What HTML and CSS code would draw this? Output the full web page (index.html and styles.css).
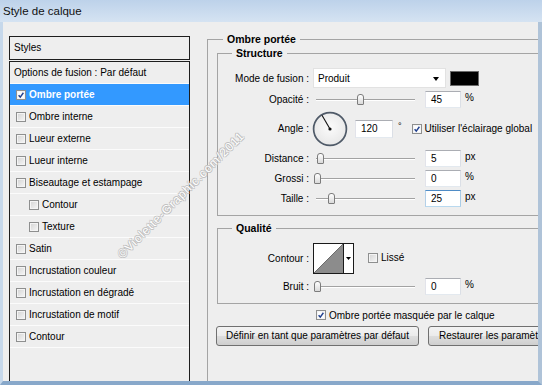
FILE: index.html
```html
<!DOCTYPE html>
<html lang="fr">
<head>
<meta charset="utf-8">
<title>Style de calque</title>
<link rel="stylesheet" href="styles.css">
</head>
<body>
<div class="window">
  <div class="titlebar">Style de calque</div>
  <div class="frame">
    <div class="styles-panel">
      <div class="styles-head">Styles</div>
      <ul class="styles-list">
        <li class="srow plain">Options de fusion : Par défaut</li>
        <li class="srow selected"><span class="cb checked"><svg viewBox="0 0 10 10"><path d="M2 5.2 L4.1 7.6 L8 2.2"/></svg></span>Ombre portée</li>
        <li class="srow"><span class="cb"></span>Ombre interne</li>
        <li class="srow"><span class="cb"></span>Lueur externe</li>
        <li class="srow"><span class="cb"></span>Lueur interne</li>
        <li class="srow"><span class="cb"></span>Biseautage et estampage</li>
        <li class="srow sub"><span class="cb"></span>Contour</li>
        <li class="srow sub"><span class="cb"></span>Texture</li>
        <li class="srow"><span class="cb"></span>Satin</li>
        <li class="srow"><span class="cb"></span>Incrustation couleur</li>
        <li class="srow"><span class="cb"></span>Incrustation en dégradé</li>
        <li class="srow"><span class="cb"></span>Incrustation de motif</li>
        <li class="srow"><span class="cb"></span>Contour</li>
      </ul>
    </div>

    <div class="settings">
      <fieldset class="group outer">
        <legend>Ombre portée</legend>

        <fieldset class="group inner structure">
          <legend>Structure</legend>
          <div class="frow tall20">
            <span class="lbl">Mode de fusion :</span>
            <div class="select"><span>Produit</span><span class="arrow"></span></div>
            <span class="swatch"></span>
          </div>
          <div class="frow">
            <span class="lbl">Opacité :</span>
            <div class="slider"><span class="thumb" style="left:41px"></span></div>
            <span class="num">45</span>
            <span class="unit">%</span>
          </div>
          <div class="frow tall35">
            <span class="lbl">Angle :</span>
            <svg class="dial" viewBox="0 0 36 36" width="36" height="36">
              <defs>
                <radialGradient id="dialbg" cx="50%" cy="45%" r="60%">
                  <stop offset="0" stop-color="#fbfbfb"/>
                  <stop offset="1" stop-color="#e6e6e6"/>
                </radialGradient>
              </defs>
              <circle cx="18" cy="18" r="16.4" fill="url(#dialbg)" stroke="#4f5a68" stroke-width="1.7"/>
              <line x1="18" y1="18" x2="10" y2="4.2" stroke="#111" stroke-width="1.1"/>
              <circle cx="18" cy="18" r="1.6" fill="#111"/>
            </svg>
            <span class="num angle">120</span>
            <span class="deg">°</span>
            <span class="cb checked glob"><svg viewBox="0 0 10 10"><path d="M2 5.2 L4.1 7.6 L8 2.2"/></svg></span>
            <span class="cbtext">Utiliser l'éclairage global</span>
          </div>
          <div class="frow gap4">
            <span class="lbl">Distance :</span>
            <div class="slider"><span class="thumb" style="left:1px"></span></div>
            <span class="num">5</span>
            <span class="unit">px</span>
          </div>
          <div class="frow">
            <span class="lbl">Grossi :</span>
            <div class="slider"><span class="thumb" style="left:-2px"></span></div>
            <span class="num">0</span>
            <span class="unit">%</span>
          </div>
          <div class="frow">
            <span class="lbl">Taille :</span>
            <div class="slider"><span class="thumb" style="left:12px"></span></div>
            <span class="num focus">25</span>
            <span class="unit">px</span>
          </div>
        </fieldset>

        <fieldset class="group inner quality">
          <legend>Qualité</legend>
          <div class="frow tall31">
            <span class="lbl">Contour :</span>
            <svg class="contour" viewBox="0 0 41 31" width="41" height="31">
              <rect x="0.5" y="0.5" width="30" height="30" fill="#ffffff" stroke="#1a1a1a"/>
              <polygon points="1,30 30,1 30,30" fill="#8c8c8c"/>
              <line x1="1" y1="30" x2="30" y2="1" stroke="#555" stroke-width="0.8"/>
              <rect x="30.5" y="0.5" width="10" height="30" fill="#ffffff" stroke="#1a1a1a"/>
              <polygon points="33,14 38,14 35.5,17" fill="#000"/>
            </svg>
            <span class="cb lisse"></span>
            <span class="cbtext">Lissé</span>
          </div>
          <div class="frow gap4">
            <span class="lbl">Bruit :</span>
            <div class="slider"><span class="thumb" style="left:-2px"></span></div>
            <span class="num">0</span>
            <span class="unit">%</span>
          </div>
        </fieldset>

        <div class="mask-row">
          <span class="cb checked"><svg viewBox="0 0 10 10"><path d="M2 5.2 L4.1 7.6 L8 2.2"/></svg></span>
          <span class="cbtext">Ombre portée masquée par le calque</span>
        </div>

        <div class="buttons">
          <span class="btn first">Définir en tant que paramètres par défaut</span>
          <span class="btn">Restaurer les paramètres par défaut</span>
        </div>
      </fieldset>
    </div>
  </div>
  <span class="watermark">©Violette-Graphic.com/2011</span>
</div>
</body>
</html>
```

FILE: styles.css
```css
* { box-sizing: border-box; }

html, body {
  margin: 0;
  padding: 0;
}

body {
  width: 542px;
  height: 385px;
  overflow: hidden;
  font-family: "Liberation Sans", Arial, sans-serif;
  font-size: 10px;
  color: #000;
  background: #c9daec;
}

.window {
  position: relative;
  width: 542px;
  height: 385px;
  display: flex;
  flex-direction: column;
  overflow: hidden;
}

.titlebar {
  flex: none;
  height: 22px;
  padding: 4px 0 0 3px;
  font-size: 11.5px;
  line-height: 14px;
  color: #111;
  background: linear-gradient(#bdd2ea, #d5e3f2);
}

.frame {
  flex: 1;
  display: flex;
  align-items: flex-start;
  min-height: 0;
  overflow: hidden;
  background: #eeeeee;
  border-left: 3px solid #c6d8eb;
  border-right: 4px solid #afc3d8;
  border-bottom: 4px solid #88a8ca;
}

/* ---------- left styles panel ---------- */
.styles-panel {
  flex: none;
  width: 181px;
  height: 360px;
  margin: 14px 0 0 6px;
}

.styles-head {
  height: 24px;
  border: 1px solid #1e1e1e;
  padding: 0 0 0 4px;
  line-height: 21px;
}

.styles-list {
  list-style: none;
  margin: 1px 0 0 0;
  padding: 0;
  height: 330px;
  border: 1px solid #1e1e1e;
  border-bottom: none;
}

.srow {
  display: flex;
  align-items: center;
  height: 22px;
  padding-left: 6px;
  border-bottom: 1px solid #fbfbfb;
  white-space: nowrap;
}

.srow.plain { padding-left: 4px; }
.srow.sub { padding-left: 19px; }

.srow .cb { margin-right: 3px; }

.srow.selected {
  background: #3399ff;
  color: #fff;
  font-weight: bold;
}

/* ---------- checkboxes ---------- */
.cb {
  flex: none;
  display: inline-block;
  width: 10px;
  height: 10px;
  border: 1px solid #8e8f8f;
  background: linear-gradient(135deg, #d3d3d3, #f7f7f7);
  box-shadow: inset 0 0 0 1px #f4f4f4;
}

.cb.checked {
  background: #fdfdfd;
}

.cb svg {
  display: block;
  width: 8px;
  height: 8px;
}

.cb svg path {
  fill: none;
  stroke: #22418f;
  stroke-width: 1.8;
}

/* ---------- right settings ---------- */
.settings {
  flex: none;
  width: 420px;
  margin-left: 17px;
}

fieldset.group {
  margin: 0;
  border: 1px solid #a4a4a4;
  min-width: 0;
}

fieldset.group legend {
  font-weight: bold;
  font-size: 10.5px;
  line-height: 12px;
  padding: 0 4px;
}

.outer {
  width: 420px;
  height: 372px;
  margin-top: 11px !important;
  padding: 0 0 0 9px;
}

.outer > legend { margin-left: 6px; }

.inner {
  width: 360px;
}

.inner > legend { margin-left: 14px; }

.structure {
  margin-top: 2px !important;
  padding: 9px 0 8px 0;
}

.quality {
  margin-top: 6px !important;
  padding: 9px 0 8px 0;
}

.frow {
  display: flex;
  align-items: center;
  height: 17px;
  white-space: nowrap;
}

.frow + .frow { margin-top: 3px; }
.frow.gap4 { margin-top: 4px; }
.frow.tall20 { height: 20px; }
.frow.tall35 { height: 35px; }
.frow.tall31 { height: 31px; }

.lbl {
  flex: none;
  width: 91px;
  text-align: right;
}

.select {
  flex: none;
  display: flex;
  align-items: center;
  justify-content: space-between;
  width: 133px;
  height: 20px;
  margin-left: 4px;
  padding: 0 6px 0 4px;
  background: #fff;
  border: 1px solid #e2e2e2;
}

.arrow {
  width: 0;
  height: 0;
  border-left: 3.5px solid transparent;
  border-right: 3.5px solid transparent;
  border-top: 4px solid #000;
  margin-top: 2px;
}

.swatch {
  flex: none;
  width: 29px;
  height: 15px;
  margin-left: 4px;
  background: #000;
  border: 1px solid #6a6a6a;
}

.slider {
  position: relative;
  flex: none;
  width: 99px;
  height: 17px;
  margin-left: 7px;
}

.slider::before {
  content: "";
  position: absolute;
  left: 0;
  right: 0;
  top: 8px;
  height: 1px;
  background: #a2a2a2;
  box-shadow: 0 1px 0 #ffffff;
}

.thumb {
  position: absolute;
  top: 3px;
  width: 7px;
  height: 11px;
  border: 1px solid #7c7c7c;
  border-radius: 3px 3px 1px 1px;
  background: linear-gradient(#ffffff, #dadada);
}

.num {
  flex: none;
  width: 36px;
  height: 17px;
  margin-left: 10px;
  padding-left: 5px;
  line-height: 15px;
  background: #fff;
  border: 1px solid;
  border-color: #abadb3 #dbdfe6 #e3e9ef #e2e3ea;
}

.num.focus {
  border-color: #4f8cc6 #a9cce6 #b9d9ef #b4d0e8;
}

.num.angle {
  width: 38px;
  height: 18px;
  line-height: 16px;
  margin-left: 7px;
}

.unit {
  margin-left: 4px;
  margin-top: -4px;
}

.dial {
  flex: none;
  margin-left: 3px;
}

.deg {
  margin-left: 5px;
  margin-top: -5px;
  font-size: 9px;
}

.cb.glob { margin-left: 10px; }

.cbtext { margin-left: 3px; }

.contour {
  flex: none;
  margin-left: 4px;
}

.cb.lisse {
  margin-left: 14px;
  margin-top: -2px;
}

.quality .cbtext { margin-top: -2px; }

.mask-row {
  display: flex;
  align-items: center;
  height: 14px;
  margin: 4px 0 0 99px;
  white-space: nowrap;
}

.buttons {
  display: flex;
  margin-top: 4px;
  white-space: nowrap;
}

.btn {
  flex: none;
  height: 20px;
  padding: 0 10px;
  line-height: 18px;
  border: 1px solid #707070;
  border-radius: 3px;
  background: linear-gradient(#f3f3f3 0%, #ebebeb 48%, #dddddd 52%, #cfcfcf 100%);
}

.btn.first {
  width: 203px;
  margin-left: -1px;
  padding: 0;
  text-align: center;
}

.btn + .btn { margin-left: 9px; }

/* ---------- watermark overlay ---------- */
.watermark {
  position: absolute;
  left: 81px;
  top: 188px;
  width: 200px;
  text-align: center;
  font-size: 12px;
  letter-spacing: 0.9px;
  color: #ffffff;
  text-shadow: 1px 0 0 #bdbdbd, -1px 0 0 #bdbdbd, 0 1px 0 #bdbdbd, 0 -1px 0 #bdbdbd;
  white-space: nowrap;
  transform: rotate(-45deg);
  pointer-events: none;
}
```
